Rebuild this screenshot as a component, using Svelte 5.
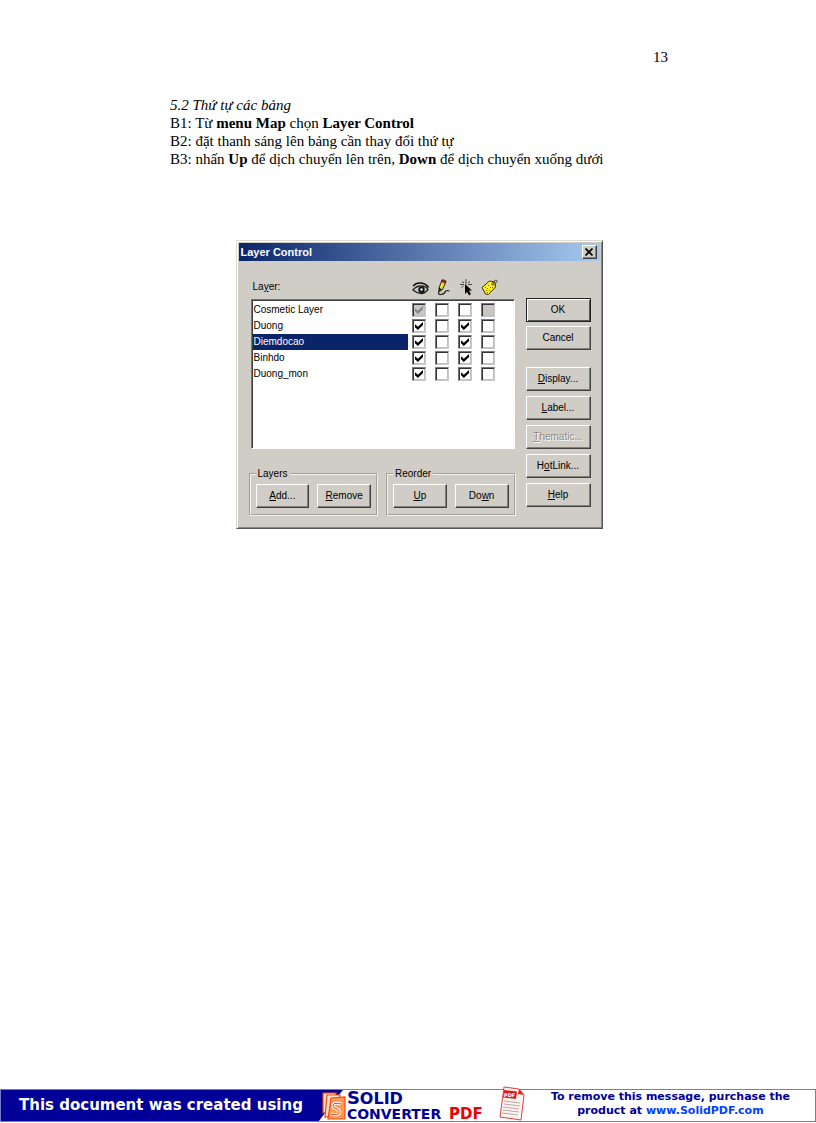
<script lang="ts">
  type Layer = {
    name: string;
    visible: boolean;
    editable: boolean;
    selectable: boolean;
    label: boolean;
    cosmetic?: boolean;
  };

  let layers: Layer[] = $state([
    { name: 'Cosmetic Layer', visible: true, editable: false, selectable: false, label: false, cosmetic: true },
    { name: 'Duong', visible: true, editable: false, selectable: true, label: false },
    { name: 'Diemdocao', visible: true, editable: false, selectable: true, label: false },
    { name: 'Binhdo', visible: true, editable: false, selectable: true, label: false },
    { name: 'Duong_mon', visible: true, editable: false, selectable: true, label: false }
  ]);
  let selected = $state('Diemdocao');
</script>

<div class="page">
  <main>
    <div class="page-number">13</div>

    <section class="text">
      <h1>5.2 Thứ tự các bảng</h1>
      <p>B1: Từ <b>menu Map</b> chọn <b>Layer Control</b></p>
      <p>B2: đặt thanh sáng lên bảng cần thay đổi thứ tự</p>
      <p>B3: nhấn <b>Up</b> để dịch chuyển lên trên, <b>Down</b> để dịch chuyển xuống dưới</p>
    </section>

    <div class="dialog" role="dialog" aria-labelledby="dialog-title">
      <header class="titlebar">
        <h2 id="dialog-title">Layer Control</h2>
        <button class="close" aria-label="Close">
          <svg width="8" height="8" viewBox="0 0 8 8"><path d="M0.5 0.5L7.5 7.5M7.5 0.5L0.5 7.5" stroke="#000" stroke-width="1.7" /></svg>
        </button>
      </header>

      <div class="body">
        <div class="left">
          <div class="list-header">
            <span class="list-label" id="layer-label">La<u>y</u>er:</span>
            <svg width="17" height="17" viewBox="0 0 17 17" aria-hidden="true">
              <path d="M1 7Q4 3.5 9 4T16.5 8.5" fill="none" stroke="#111" stroke-width="1.6" />
              <path d="M1 11Q4 7 9 7T16 10.5Q13 14.5 9 14.5T1 11Z" fill="#ccc" stroke="#222" stroke-width="1.3" />
              <circle cx="9.5" cy="10.8" r="3.2" fill="#111" />
              <circle cx="9.5" cy="10.5" r="1.2" fill="#fff" />
            </svg>
            <svg width="17" height="17" viewBox="0 0 17 17" aria-hidden="true">
              <path d="M7 1L11 2.5L7.5 10.5L4.5 12.5L4 9Z" fill="#ffe020" stroke="#222" />
              <path d="M7.5 0.5L11 2L10.3 4L6.5 2.8Z" fill="#c02020" stroke="#301010" stroke-width="0.6" />
              <path d="M4 8.5L3.5 12.5L7 10.5Z" fill="#111" />
              <path d="M4 12Q2.5 16 6 15.5T10 13T14.5 12" fill="none" stroke="#222" stroke-width="1.2" />
            </svg>
            <svg width="17" height="17" viewBox="0 0 17 17" aria-hidden="true">
              <path d="M8 0V5M2 5.5H6M10 5.5H14M4 2.5L6 4M12 2.5L10 4M3.5 8.5L5.5 7" stroke="#444" fill="none" />
              <path d="M7 5L14 11.5H11L13 15L11 16.5L9 13L7 15Z" fill="#000" />
            </svg>
            <svg width="17" height="17" viewBox="0 0 17 17" aria-hidden="true">
              <path d="M1 8.5L8.5 2L14 3L14.5 8L7.5 15.5L4.5 15Z" fill="#ffee20" stroke="#332f00" />
              <circle cx="12" cy="5" r="1.2" fill="#fff" stroke="#222" stroke-width="0.8" />
              <path d="M12 4.5Q13 1 15 1T15.5 4" fill="none" stroke="#555" />
              <path d="M4 8.5H5M7 6.5H8M6 9.5H7M9 8.5H10M5 11.5H6M8 11.5H9M11 8.5H12M6 13.5H7" stroke="#776600" />
            </svg>
          </div>

          <div class="list">
            <table aria-labelledby="layer-label">
              <tbody>
                {#each layers as layer}
                  <tr class:selected={layer.name === selected} onclick={() => (selected = layer.name)}>
                    <th scope="row">{layer.name}</th>
                    <td><input type="checkbox" aria-label="{layer.name} visible" bind:checked={layer.visible} disabled={layer.cosmetic} /></td>
                    <td><input type="checkbox" aria-label="{layer.name} editable" bind:checked={layer.editable} /></td>
                    <td><input type="checkbox" aria-label="{layer.name} selectable" bind:checked={layer.selectable} /></td>
                    <td><input type="checkbox" aria-label="{layer.name} auto label" bind:checked={layer.label} disabled={layer.cosmetic} /></td>
                  </tr>
                {/each}
              </tbody>
            </table>
          </div>

          <div class="groups">
            <fieldset>
              <legend>Layers</legend>
              <button><u>A</u>dd...</button>
              <button><u>R</u>emove</button>
            </fieldset>
            <fieldset>
              <legend>Reorder</legend>
              <button><u>U</u>p</button>
              <button>Do<u>w</u>n</button>
            </fieldset>
          </div>
        </div>

        <div class="actions">
          <button class="default">OK</button>
          <button class="cancel">Cancel</button>
          <button><u>D</u>isplay...</button>
          <button><u>L</u>abel...</button>
          <button disabled><u>T</u>hematic...</button>
          <button>H<u>o</u>tLink...</button>
          <button><u>H</u>elp</button>
        </div>
      </div>
    </div>
  </main>

  <footer>
    <div class="created">This document was created using</div>
    <div class="brand">
      <svg class="brand-icon" width="26" height="30" viewBox="0 0 26 30" aria-hidden="true">
        <g stroke="#f04a10" stroke-width="1.2">
          <path d="M2 2H15V20L2 22Z" fill="#ffd9b8" />
          <path d="M6 4H19V24L4 26Z" fill="#ffe6d0" />
          <path d="M10 7L24 6V28L7 28Z" fill="#ff9a50" />
        </g>
        <path d="M20 13Q12 11 12 15Q12 17 16 18Q19 19 18 22Q17 25 10 23" fill="none" stroke="#fff" stroke-width="3" />
        <path d="M20 13Q12 11 12 15Q12 17 16 18Q19 19 18 22Q17 25 10 23" fill="none" stroke="#e03c08" stroke-width="1" />
      </svg>
      <div class="brand-name">
        <div class="solid"><span class="big">S</span>OLID</div>
        <div class="converter">CONVERTER <span class="red">PDF</span></div>
      </div>
      <svg class="pdf-icon" width="27" height="36" viewBox="0 0 27 36" aria-hidden="true">
        <path d="M5 1L20 3L25 9L22 34L1 31Z" fill="#fff4f0" stroke="#e04040" />
        <path d="M20 3L19 8L25 9Z" fill="#d22" />
        <path d="M5 4L18 5.5L17 13L4 11.5Z" fill="#e01818" />
        <text x="5" y="11" class="pdf-text">PDF</text>
        <path d="M5 15L21 17M5 18L21 20M4 21L20 23M4 24L20 26M3 27L19 29" stroke="#b9a6a6" />
      </svg>
    </div>
    <div class="purchase">
      To remove this message, purchase the<br />product at <a href="http://www.SolidPDF.com">www.SolidPDF.com</a>
    </div>
  </footer>
</div>

<style>
  :global(body) {
    margin: 0;
    background: #fff;
  }
  .page {
    min-height: 100vh;
    display: flex;
    flex-direction: column;
    box-sizing: border-box;
    padding-bottom: 1px;
    color: #000;
    font-family: 'Liberation Serif', serif;
    font-size: 15px;
    line-height: 18px;
  }
  main {
    padding: 48px 148px 40px 170px;
  }
  .page-number {
    text-align: right;
  }
  .text {
    margin: 30px 0 72px;
  }
  h1, h2, p {
    margin: 0;
    font-size: inherit;
  }
  h1 {
    font-weight: normal;
    font-style: italic;
  }

  .dialog {
    box-sizing: border-box;
    width: 367px;
    max-width: 100%;
    margin: 0 auto;
    padding: 2px;
    border: 1px solid;
    border-color: #dedbd4 #555 #555 #dedbd4;
    box-shadow: inset 1px 1px #fff, inset -1px -1px #888;
    background: #d0cdc6;
    font: 10px/14px 'Liberation Sans', sans-serif;
  }
  .titlebar {
    display: flex;
    align-items: center;
    justify-content: space-between;
    height: 18px;
    padding: 0 3px 0 2px;
    background: linear-gradient(to right, #0a246a, #a6caf0);
    color: #fff;
  }
  .titlebar h2 {
    font: bold 11px/14px 'Liberation Sans', sans-serif;
  }
  button {
    box-sizing: border-box;
    height: 24px;
    padding: 0;
    border: 1px solid;
    border-color: #fff #404040 #404040 #fff;
    box-shadow: inset -1px -1px #848078;
    background: #d0cdc6;
    color: #000;
    font: inherit;
  }
  button:disabled {
    color: #8c8a84;
    text-shadow: 1px 1px #fff;
  }
  .close {
    display: flex;
    align-items: center;
    justify-content: center;
    width: 15px;
    height: 14px;
  }

  .body {
    display: flex;
    justify-content: space-between;
    padding: 10px 9px 10px 10px;
  }
  .left {
    width: 267px;
  }
  .list-header {
    display: grid;
    grid-template-columns: 160px repeat(4, 23px);
    align-items: center;
    justify-items: center;
    height: 24px;
    padding-top: 4px;
  }
  .list-header .list-label {
    justify-self: start;
    padding-left: 4px;
  }
  .list {
    box-sizing: border-box;
    height: 150px;
    margin: 0 1px 0 2px;
    border: 1px solid;
    border-color: #777 #fff #fff #777;
    box-shadow: inset 1px 1px #404040;
    padding: 2px 1px 1px;
    background: #fff;
  }
  table {
    border-collapse: collapse;
    table-layout: fixed;
  }
  th {
    width: 155px;
    height: 16px;
    padding: 0 0 0 1px;
    box-sizing: border-box;
    font-weight: normal;
    text-align: left;
  }
  td {
    width: 23px;
    padding: 0;
    text-align: center;
    background: #fff;
  }
  .selected th {
    background: #0a246a;
    color: #fff;
  }
  input {
    appearance: none;
    display: block;
    box-sizing: border-box;
    width: 14px;
    height: 14px;
    margin: 1px auto;
    border: 1px solid;
    border-color: #777 #c8c8c8 #c8c8c8 #777;
    box-shadow: inset 1px 1px #333, inset -1px -1px #c4c0b8;
    background: #fff;
  }
  input:disabled {
    background: #c8c6c2;
  }
  input:checked::before {
    content: '';
    display: block;
    width: 8px;
    height: 8px;
    margin: 2px;
    background: #000;
    clip-path: polygon(0 29%, 36% 58%, 100% 0, 100% 36%, 36% 100%, 0 65%);
  }
  input:disabled:checked::before {
    background: #888;
  }

  .groups {
    display: flex;
    gap: 8px;
    margin-top: 18px;
  }
  fieldset {
    display: flex;
    gap: 8px;
    box-sizing: border-box;
    flex: 1;
    min-width: 0;
    height: 49px;
    margin: 0;
    padding: 3px 5px;
    border: 2px groove #f4f2ee;
  }
  fieldset button {
    flex: 1;
  }
  legend {
    padding: 0 2px;
  }

  .actions {
    display: flex;
    flex-direction: column;
    gap: 5px;
    width: 65px;
    padding-top: 27px;
  }
  .actions .default {
    margin-bottom: -1px;
    border-color: #222;
    box-shadow: inset 1px 1px #fff, inset -1px -1px #555;
  }
  .actions .cancel {
    margin-bottom: 12px;
  }

  footer {
    display: flex;
    box-sizing: border-box;
    height: 33px;
    margin-top: auto;
    border: 1px solid #7878c8;
    font-family: 'DejaVu Sans', sans-serif;
    font-weight: bold;
    color: #000099;
  }
  .created {
    box-sizing: border-box;
    width: 42%;
    padding-left: 18px;
    background: #000099;
    clip-path: polygon(0 0, 100% 0, 93% 100%, 0 100%);
    color: #fff;
    font-size: 15px;
    line-height: 31px;
    white-space: nowrap;
  }
  .brand {
    display: flex;
    flex: none;
    width: 205px;
    margin-left: -22px;
    align-items: center;
    /* the logo sits on top of the slanted banner edge */
    z-index: 1;
  }
  .brand-name {
    white-space: nowrap;
  }
  .solid {
    font-size: 16px;
    line-height: 16px;
  }
  .big {
    font-size: 18px;
  }
  .converter {
    font-size: 14px;
    line-height: 14px;
  }
  .red {
    margin-left: 3px;
    font-size: 15px;
    color: #f00000;
  }
  .pdf-icon {
    flex: none;
    margin: -6px 0 -2px auto;
  }
  .pdf-text {
    font-size: 5px;
    fill: #fff;
  }
  .purchase {
    flex: 1;
    text-align: center;
    font-size: 11px;
    line-height: 14px;
    white-space: nowrap;
  }
  .purchase a {
    color: #0040ff;
    text-decoration: none;
  }
</style>
